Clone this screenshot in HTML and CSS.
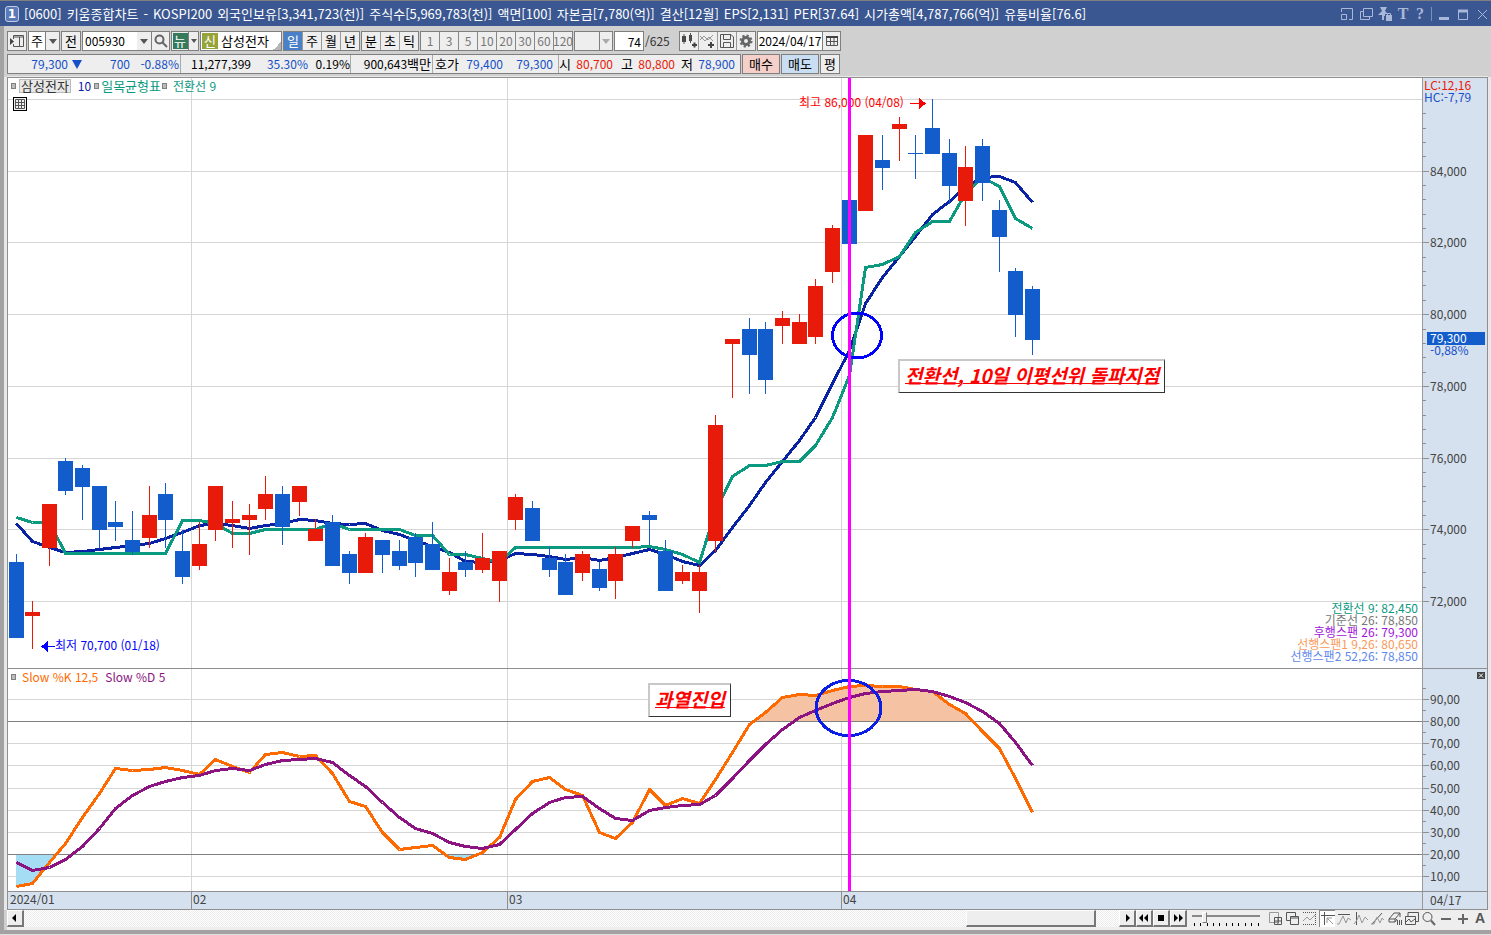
FILE: index.html
```html
<!DOCTYPE html>
<html lang="ko">
<head>
  <meta charset="UTF-8">
  <meta name="viewport" content="width=device-width, initial-scale=1.0">
  <title>[0600] 키움종합차트</title>
  <link rel="stylesheet" href="styles.css">
</head>
<body>
  <div class="window">
    <header class="titlebar">
      <span class="badge">1</span>
      <h1 class="title">
        <span>[0600]</span><span>키움종합차트</span><span>-</span><span>KOSPI200</span><span>외국인보유[3,341,723(천)]</span><span>주식수[5,969,783(천)]</span><span>액면[100]</span><span>자본금[7,780(억)]</span><span>결산[12월]</span><span>EPS[2,131]</span><span>PER[37.64]</span><span>시가총액[4,787,766(억)]</span><span>유통비율[76.6]</span>
      </h1>
      <div class="win-buttons">
        <button aria-label="축소"><svg width="14" height="14"><path d="M1.500 5V1.500H12.500V12.500H9M1.500 7.500H6.500V12.500H1.500Z"/></svg></button>
        <button aria-label="복제"><svg width="14" height="14"><path d="M4.500 1.500H13.500V9.500H4.500ZM4 4.500H1.500V12.500H10.500V10"/></svg></button>
        <button aria-label="고정"><svg width="14" height="14"><path class="solid" d="M2 0H9L7 4L10 7H7V9H6V13H4V8H0L4 4ZM8 8H14V14H8Z"/><path d="M9.500 9V6.500H12.500V9"/></svg></button>
        <button class="serif">T</button>
        <button class="serif">?</button>
        <i class="bar"></i>
        <button aria-label="최소화"><svg width="14" height="14"><path class="thick" d="M2 11.500H12"/></svg></button>
        <button aria-label="최대화"><svg width="14" height="14"><path d="M2.500 3.500H11.500V12.500H2.500Z"/><path class="thick" d="M2 4H12"/></svg></button>
        <button aria-label="닫기"><svg width="14" height="14"><path d="M3 3L12 12M12 3L3 12"/></svg></button>
      </div>
    </header>

    <div class="frame">
      <div class="toolbar">
        <button class="box sq" aria-label="패널"><svg width="16" height="16"><path class="ln" d="M4.500 6V2.500H14.500V13.500H4.500V11M5 4H14M10.500 4V13"/><path class="fl" d="M1 5L5 8.500L1 12Z"/></svg></button>
        <div class="box combo"><button class="white w17">주</button><button class="arrow" aria-label="목록"></button></div>
        <button class="box sq">전</button>
        <div class="box combo">
          <input class="code" type="text" value="005930" aria-label="종목코드"><button class="arrow noline" aria-label="종목 목록"></button>
          <button class="sq18" aria-label="검색"><svg width="16" height="16"><circle class="ln2" cx="6.500" cy="6.500" r="4"/><path class="ln2" d="M9.500 9.500L14 14"/></svg></button>
        </div>
        <div class="box combo"><button class="w17"><b class="news">뉴</b></button><button class="arrow small" aria-label="뉴스 목록"></button></div>
        <div class="box name"><b class="sin">신</b><span>삼성전자</span></div>
        <div class="box seg period"><button class="on">일</button><button>주</button><button>월</button><button>년</button></div>
        <div class="box seg intraday"><button>분</button><button>초</button><button>틱</button></div>
        <div class="box seg off"><button>1</button><button>3</button><button>5</button><button>10</button><button>20</button><button>30</button><button>60</button><button>120</button></div>
        <div class="box combo blank"><span class="w24"></span><button class="arrow dim" aria-label="단위"></button></div>
        <input class="box count" type="text" value="74" aria-label="봉 개수">
        <span class="total">/625</span>
        <div class="box seg period">
          <button aria-label="차트형태"><svg width="18" height="18"><path class="fl" d="M2 4H6V10H2ZM9 3H12V9H9ZM12 12H17V14H12ZM13.500 10.500H15.500V15.500H13.500Z"/><path class="ln" d="M4 2V12M10.500 1V11"/></svg></button>
          <button aria-label="지표추가"><svg width="18" height="18"><path class="lg" d="M1 8L5 4L9 8L14 3M1 4L6 9L10 5L14 9"/><path class="fl" d="M9 12H15V14H9ZM11 10H13V16H11Z"/></svg></button>
          <button aria-label="저장"><svg width="18" height="18"><path class="ln" d="M2.500 2.500H13L15.500 5V15.500H2.500ZM5.500 3V7.500H12.500V3M5.500 15V10.500H12.500V15"/></svg></button>
          <button aria-label="설정"><svg width="18" height="18"><circle cx="9" cy="9" r="3.500" fill="none" stroke="#666" stroke-width="3"/><circle cx="9" cy="9" r="5.500" fill="none" stroke="#666" stroke-width="2" stroke-dasharray="2.200 2.100"/></svg></button>
        </div>
        <div class="box combo">
          <input class="date" type="text" value="2024/04/17" aria-label="날짜">
          <button class="sq18" aria-label="달력"><svg width="14" height="14"><path class="ln" d="M1.500 2.500H12.500V11.500H1.500ZM5.500 4V11M9 4V11M2 7.500H12"/><path class="fl" d="M1 2H13V4H1Z"/></svg></button>
        </div>
      </div>

      <div class="quotes">
        <div class="box cells">
          <span class="down c60">79,300</span><span class="down tri"></span><span class="down c46">700</span><span class="down c48">-0.88%</span>
          <i></i><span class="c70">11,277,399</span><span class="down c58">35.30%</span><span class="c42">0.19%</span>
          <i></i><span class="c80">900,643<em>백만</em></span>
          <i></i><em class="c26">호가</em><span class="down c44">79,400</span><span class="down c50">79,300</span><b></b>
          <i></i><em class="c12">시</em><span class="up c42">80,700</span><em class="c20">고</em><span class="up c42">80,800</span><em class="c18">저</em><span class="down c42">78,900</span>
        </div>
        <button class="box buy">매수</button>
        <button class="box sell">매도</button>
        <button class="box sq">평</button>
      </div>

      <main class="chart">
        <div class="row">
          <div class="plot">
            <svg id="plot" width="100%" height="813"></svg>
            <div class="legend top">
              <i class="dot"></i><button class="stock">삼성전자</button><span class="ma">10</span><i class="dot"></i><span class="conv">일목균형표</span><i class="dot"></i><span class="conv last">전환선 9</span>
            </div>
            <button class="grid-btn" aria-label="표"><svg width="12" height="12"><path class="ln" d="M1.500 1.500H10.500V10.500H1.500ZM1 4.500H11M1 7.500H11M4.500 2V10M7.500 2V10"/></svg></button>
            <div class="legend mid"><i class="dot"></i><span class="k">Slow %K 12,5</span><span class="d">Slow %D 5</span></div>
            <ul class="spans">
              <li class="s1">전환선 9: 82,450</li>
              <li class="s2">기준선 26: 78,850</li>
              <li class="s3">후행스팬 26: 79,300</li>
              <li class="s4">선행스팬1 9,26: 80,650</li>
              <li class="s5">선행스팬2 52,26: 78,850</li>
            </ul>
            <div class="note cross">전환선, 10일 이평선위 돌파지점</div>
            <div class="note heat">과열진입</div>
          </div>
          <svg id="axis" width="65" height="813"></svg>
        </div>
        <div class="row dates">
          <svg id="months" width="100%" height="17"></svg>
          <span class="today">04/17</span>
        </div>
      </main>

      <footer class="bottom">
        <button class="step" aria-label="왼쪽"><svg width="14" height="14"><path d="M8 3V11L4 7Z"/></svg></button>
        <div class="track"><div class="thumb"></div></div>
        <button class="step" aria-label="재생"><svg width="14" height="14"><path d="M6 3V11L10 7Z"/></svg></button>
        <button class="step" aria-label="뒤로"><svg width="14" height="14"><path d="M6 3V11L2 7ZM11 3V11L7 7Z"/></svg></button>
        <button class="step" aria-label="정지"><svg width="14" height="14"><path d="M4 4H10V10H4Z"/></svg></button>
        <button class="step" aria-label="앞으로"><svg width="14" height="14"><path d="M3 3V11L7 7ZM8 3V11L12 7Z"/></svg></button>
        <div class="speed">
          <input type="range" min="0" max="10" value="1" aria-label="속도">
          <svg width="68" height="3"><path d="M2.500 0V3M8.500 0V3M15.500 0V3M21.500 0V3M27.500 0V3M34.500 0V3M40.500 0V3M46.500 0V3M53.500 0V3M59.500 0V3M66.500 0V3" stroke="#000"/></svg>
        </div>
        <div class="tools">
          <button aria-label="추가"><svg width="16" height="16"><path class="lg" d="M1.500 1.500H10.500V11.500H1.500Z"/><path class="ln" d="M6.500 6.500H13.500V13.500H6.500ZM10 7V13M7 10H13"/></svg></button>
          <button aria-label="겹치기"><svg width="16" height="16"><path class="ln" d="M5 9.500H1.500V1.500H10.500V5M5.500 5.500H13.500V13.500H5.500ZM6 7H13"/></svg></button>
          <button aria-label="영역"><svg width="16" height="16"><path class="lg" d="M1 10L5 6L8 9L13 4"/><path class="ln" stroke-dasharray="1 1" d="M1 1.500H14M1 13.500H14M13.500 3V12"/></svg></button>
          <button class="on" aria-label="십자선"><svg width="16" height="16"><path class="ln" d="M1 4.500H15M4.500 1V14"/><path class="lg" d="M7 7L13 13M7 12V7H12"/></svg></button>
          <button aria-label="수평선"><svg width="16" height="16"><path class="ln" d="M2 3.500H14"/><path class="lg" d="M1 13H3L7 5L10 12L12 7L15 9"/></svg></button>
          <button aria-label="수직선"><svg width="16" height="16"><path class="ln" d="M3.500 1V14"/><path class="lg" d="M1 13L4 9L6 4L9 12L12 6L15 9"/></svg></button>
          <button aria-label="추세선"><svg width="16" height="16"><path class="ln" d="M2 13L12 2"/><path class="lg" d="M1 13H4L7 6L10 12L12 7L14 9"/></svg></button>
          <button aria-label="모두 지우기"><svg width="16" height="16"><path class="ln" d="M2 8L7 2H13L8 8ZM2 8V11H8V8M8 11L10 8M13 2V6M10.500 9V14M12.500 9V14M14.500 9V14"/></svg></button>
          <button aria-label="차트 저장"><svg width="16" height="16"><path class="ln" d="M4 5.500V1.500H14.500V10.500H12M1.500 5.500H11.500V13.500H1.500ZM2 11L5 8L7 11L11 8"/></svg></button>
          <button aria-label="확대경"><svg width="16" height="16"><circle class="ln" cx="6.500" cy="6" r="4.500"/><path class="ln2" d="M10 9.500L14 14"/></svg></button>
          <button aria-label="축소"><svg width="16" height="16"><path class="ln2" d="M3 8H13"/></svg></button>
          <button aria-label="확대"><svg width="16" height="16"><path class="ln2" d="M3 8H13M8 3V13"/></svg></button>
          <button class="auto">A</button>
        </div>
      </footer>
    </div>
  </div>
  <script src="chart.js"></script>
</body>
</html>
```
FILE: styles.css
```css
* { box-sizing: border-box; margin: 0; padding: 0; }
body {
  background: #e0e0e0;
  font-family: "Noto Sans CJK KR", sans-serif;
  font-size: 13px;
  line-height: 18px;
  color: #000;
}
button, input {
  font: inherit;
  color: inherit;
  border: 0;
  background: none;
  display: flex;
  align-items: center;
  justify-content: center;
  flex: none;
}
svg { display: block; flex: none; }
.ln { fill: none; stroke: #555; }
.ln2 { fill: none; stroke: #666; stroke-width: 2; }
.lg { fill: none; stroke: #999; }
.fl { fill: #444; }

.window { border-top: 1px solid #7f7f7f; white-space: nowrap; overflow: hidden; }
.titlebar {
  display: flex;
  align-items: center;
  height: 25px;
  padding: 0 2px 0 5px;
  background: #3a5791;
  color: #fff;
}
.badge {
  width: 14px;
  height: 16px;
  border: 1px solid #c3cee5;
  border-radius: 3px;
  background: #5a7ab8;
  font: bold 12px/14px "DejaVu Sans", sans-serif;
  text-align: center;
}
.title {
  display: flex;
  gap: 5px;
  flex: 1;
  padding-left: 5px;
  font-size: 13px;
  font-weight: normal;
}
.win-buttons { display: flex; align-items: center; gap: 5px; color: #a9b8d8; }
.win-buttons path { fill: none; stroke: #a9b8d8; }
.win-buttons .solid { fill: #a9b8d8; stroke: none; }
.win-buttons .thick { stroke-width: 3; }
.win-buttons .serif { width: 12px; font: bold 16px/18px "Liberation Serif", serif; }
.win-buttons .bar { width: 1px; height: 14px; background: #7d90b8; }

.frame {
  background: #d0d0d0;
  border-left: 4px solid #a3a1a1;
  border-bottom: 4px solid #a3a1a1;
  padding-top: 5px;
}
.box { border: 1px solid #7f7f7f; background: #eee; height: 20px; flex: none; }
.toolbar, .quotes { display: flex; gap: 1px; padding-left: 3px; }
.quotes { margin-top: 3px; padding-bottom: 3px; }
.sq { width: 20px; }
.combo { display: flex; }
.combo > * + * { border-left: 1px solid #7f7f7f; }
.combo .noline { border-left: 0; }
.white { background: #fff; }
.w17 { width: 16px; }
.w24 { width: 24px; }
.sq18 { width: 18px; }
.arrow { width: 14px; }
.arrow::before { content: ""; border: 4px solid transparent; border-top: 5px solid #555; border-bottom: 0; }
.arrow.small { width: 10px; }
.arrow.small::before { border-width: 3px; border-top-width: 4px; border-bottom: 0; }
.arrow.dim::before { border-top-color: #aaa; }
.blank { width: 39px; }
.blank .arrow { width: 13px; }
.code { width: 54px; padding-left: 2px; background: #fff; font-size: 12px; }
.date { width: 64px; background: #fff; text-align: center; font-size: 12px; }
.news, .sin { display: block; width: 16px; height: 16px; line-height: 15px; font-weight: normal; color: #fff; text-align: center; }
.news { width: 15px; background: #357a5c; }
.sin { background: #98a43a; }
.name {
  display: flex;
  align-items: center;
  gap: 3px;
  width: 82px;
  padding-left: 1px;
  background: linear-gradient(135deg, transparent 50%, #b5b5b5 50%) right bottom / 8px 8px no-repeat #fff;
}
.seg { display: flex; }
.seg button { flex: 1 1 0; min-width: 0; }
.seg button + button { border-left: 1px solid #999; }
.seg .on { background: #4a80c8; color: #fff; }
.period { width: 77px; }
.intraday { width: 58px; }
.off { width: 153px; color: #777; font-size: 12px; }
.off button + button { border-color: #888; }
.count { width: 30px; padding-right: 2px; background: #fff; text-align: right; font-size: 12px; }
.total { width: 33px; color: #333; font-size: 12px; line-height: 20px; }

.cells { display: flex; width: 734px; font-size: 12px; }
.cells em { font-size: 13px; font-style: normal; text-align: right; flex: none; }
.cells span { text-align: right; flex: none; }
.cells i { width: 1px; background: #aaa; }
.cells b { width: 5px; }
.down { color: #1650c8; }
.up { color: #e81a0a; }
.tri { width: 16px; padding: 5px 0 0 4px; }
.tri::before { content: ""; display: block; width: 0; border: 5px solid transparent; border-top: 9px solid #1650c8; border-bottom: 0; }
.c12 { width: 12px; }
.c18 { width: 18px; }
.c20 { width: 20px; }
.c26 { width: 26px; }
.c42 { width: 42px; }
.c44 { width: 44px; }
.c46 { width: 46px; }
.c48 { width: 49px; margin-right: 1px; }
.c50 { width: 50px; }
.c58 { width: 57px; }
.c60 { width: 60px; }
.c70 { width: 70px; }
.c80 { width: 80px; margin-right: 1px; }
.buy { width: 38px; background: #f5d0cb; }
.sell { width: 38px; background: #c9def3; }

.chart {
  margin-right: 3px;
  margin-left: 3px;
  border: 1px solid #8f8f8f;
  background: #d6e1ef;
  box-shadow: -3px 0 #e8e8e8, 3px 0 #e8e8e8, 0 -1px #e8e8e8;
}
.row { display: flex; }
.plot { position: relative; flex: 1; min-width: 0; background: #fff; }
#plot { shape-rendering: crispEdges; }
#plot text, #axis text, #months text { font-size: 12px; }
#axis { border-left: 1px solid #999; }
#axis text, #months text { fill: #444; }
#axis .lc { fill: #e81a0a; }
#axis .hc { fill: #1650c8; }
#axis .now { fill: #fff; }
.legend { position: absolute; left: 3px; display: flex; align-items: center; height: 14px; line-height: 14px; }
.top { top: 1px; }
.mid { top: 592px; font-size: 12px; }
.dot { width: 5px; height: 6px; border: 1px solid #808080; background: #bbb; }
.stock { height: 14px; margin: 0 7px 0 3px; padding: 0 1px; border: 1px solid #bbb; background: #e8e8e8; color: #333; }
.ma { margin-right: 3px; font-size: 12px; color: #0a23a5; }
.conv { margin: 0 1px 0 2px; color: #0b9a80; }
.last { margin-left: 6px; font-size: 12px; }
.k { margin: 0 7px 0 6px; color: #ff6a00; }
.d { color: #8c1482; }
.grid-btn { position: absolute; left: 5px; top: 19px; width: 14px; height: 14px; border: 1px solid #000; background: #eee; }
.spans { position: absolute; right: 4px; top: 524px; list-style: none; text-align: right; font-size: 12px; line-height: 12px; }
.s1 { color: #0b9a80; }
.s2 { color: #777; }
.s3 { color: #a014dc; }
.s4 { color: #f79a5c; }
.s5 { color: #5f87eb; }
.note {
  position: absolute;
  padding: 0 5px;
  height: 34px;
  border: 2px solid #c8c8c8;
  border-right: 1px solid #333;
  border-bottom: 1px solid #333;
  background: #fff;
  color: #f00;
  font: italic bold 19px/27px "Noto Sans CJK KR", sans-serif;
  text-decoration: underline 1px;
  text-underline-offset: 0;
}
.cross { left: 890px; top: 281px; }
.heat { left: 640px; top: 605px; }

.dates { border-top: 1px solid #8f8f8f; }
#months { flex: 1; min-width: 0; }
.today { width: 65px; padding-left: 7px; border-left: 1px solid #999; font-size: 12px; line-height: 16px; color: #444; }

.bottom { display: flex; margin-left: 3px; height: 20px; padding-bottom: 3px; background: #eee; align-items: stretch; }
.step {
  width: 17px;
  border: 1px solid #fff;
  border-right: 2px solid #777;
  border-bottom: 2px solid #777;
  background: #eee;
}
.track { flex: 1; background: repeating-conic-gradient(#fff 0 25%, #ececec 0 50%) 0 0 / 2px 2px; }
.thumb {
  width: 130px;
  height: 17px;
  margin-left: auto;
  margin-right: 23px;
  border: 1px solid #fff;
  border-right: 2px solid #777;
  border-bottom: 2px solid #777;
  background: #eee;
}
.speed { width: 73px; padding: 1px 0 0 5px; }
.speed input { appearance: none; width: 68px; height: 12px; background: linear-gradient(#888, #888) 0 4px / 100% 2px no-repeat; }
.speed input::-webkit-slider-thumb {
  appearance: none;
  width: 5px;
  height: 11px;
  margin-left: 4px;
  border: 1px solid #fff;
  border-right-color: #777;
  border-bottom-color: #777;
  background: #eee;
}
.tools { display: flex; gap: 1px; padding: 0 3px 0 8px; }
.tools button { width: 16px; }
.tools .on { background: #fff; border-left: 1px solid #888; border-top: 1px solid #888; }
.auto { font: bold 14px/17px "Liberation Sans", sans-serif; color: #555; }
```
FILE: chart.js
```js
// candles: [up?, high, body top, body bottom, low] in screen rows
const candles = [
  [0,554,562,638,638],[1,601,612,616,649],[1,504,504,548,566],[0,458,461,491,495],[0,465,468,487,520],
  [0,486,486,530,548],[0,501,522,527,541],[0,511,540,552,555],[1,486,515,538,548],[0,483,494,520,548],
  [0,530,551,577,584],[1,522,544,566,570],[1,486,486,530,541],[1,501,519,523,548],[1,504,515,520,555],
  [1,476,494,509,520],[0,486,494,527,545],[1,486,486,502,516],[1,519,529,541,541],[0,515,522,566,566],
  [0,551,554,573,584],[1,533,537,573,573],[0,540,540,555,573],[0,540,551,566,570],[0,533,537,563,577],
  [0,522,544,570,570],[1,558,572,591,595],[0,551,562,570,577],[1,533,558,570,573],[1,551,551,581,602],
  [1,494,497,520,530],[0,501,508,541,541],[0,547,558,570,577],[0,554,562,595,595],[1,551,554,573,581],
  [0,562,569,588,591],[1,547,554,581,599],[1,526,526,541,548],[0,511,515,520,545],[0,540,551,591,591],
  [1,565,572,581,584],[1,565,572,591,613],[1,415,425,541,552],[1,339,339,344,398],[0,318,329,355,394],
  [0,322,329,380,394],[1,311,318,326,344],[1,314,322,344,344],[1,279,286,337,344],[1,225,228,272,283],
  [0,200,200,244,244],[1,135,135,211,211],[0,135,160,168,190],[1,117,124,129,161],[0,135,153,154,179],
  [0,99,128,154,154],[0,139,153,186,204],[1,146,167,201,226],[0,139,146,183,201],[0,200,210,237,272],
  [0,268,271,315,337],[0,286,289,340,355]
];
const ma10 = [523,541,547,552,551,549,547,545,543,538,532,525,523,525,528,525,523,519,520,523,524,523,530,534,540,546,552,561,562,560,553,554,556,559,557,560,557,553,549,554,561,565,550,527,505,482,461,440,417,383,350,303,277,256,236,214,201,187,177,176,182,202];
const conv = [517,522,522,553,553,553,553,553,553,553,520,520,523,533,533,529,529,529,529,523,529,529,529,529,535,535,554,554,558,562,547,547,547,547,547,547,547,547,546,549,554,562,511,476,465,465,461,461,445,417,375,267,264,256,232,221,221,193,177,186,218,228];
const slowK = [886,883,862,843,817,793,768,770,769,767,770,774,759,766,772,754,752,756,755,773,801,806,832,849,847,845,857,859,852,837,799,781,777,789,795,832,838,822,789,805,798,803,779,752,724,712,697,694,695,690,686,685,686,686,689,691,704,713,731,748,778,812];
const slowD = [862,870,867,859,846,828,808,795,786,781,777,775,770,768,770,764,760,759,758,762,775,786,802,817,828,833,842,846,848,844,829,813,802,797,796,808,818,820,810,807,805,804,795,778,760,744,729,717,710,703,697,693,691,690,689,691,696,702,711,723,742,765];

const LEFT = 8, TOP = 78;
const H = 813;
const RED = '#e81a0a', BLUE = '#125ccc';
const cx = i => Math.floor(16 + 16.662 * i) - LEFT;
const priceY = p => Math.round(21 + (86000 - p) * 0.03586) + 0.5;
const oscY = v => Math.round(643 + (80 - v) * 2.2167) + 0.5;
const line = (x1, y1, x2, y2, color, w = 1) =>
  `<line x1="${x1}" y1="${y1}" x2="${x2}" y2="${y2}" stroke="${color}" stroke-width="${w}"/>`;
const points = arr => arr.map((y, i) => `${cx(i) + 0.5},${y - TOP + 0.5}`).join(' ');
const poly = (arr, color) => `<polyline points="${points(arr)}" fill="none" stroke="${color}" stroke-width="3" stroke-linejoin="round"/>`;
const months = [['2024/01', 0], ['02', 183], ['03', 499], ['04', 833]];

// plot
let s = '';
for (let p = 86000; p >= 72000; p -= 2000) s += line(0, priceY(p), '100%', priceY(p), '#d6d6d6');
for (let v = 90; v >= 10; v -= 10) {
  if (v !== 80 && v !== 20) s += line(0, oscY(v), '100%', oscY(v), '#d6d6d6');
}
months.slice(1).forEach(m => s += line(m[1] + 0.5, 0, m[1] + 0.5, H, '#d6d6d6'));
s += line(0, 590.5, '100%', 590.5, '#8f8f8f');

const hi = oscY(80), lo = oscY(20), end = cx(61);
s += `<clipPath id="over"><rect width="100%" height="${hi}"/></clipPath>
  <clipPath id="under"><rect y="${lo}" width="100%" height="60"/></clipPath>
  <polygon points="${cx(0)},${hi} ${points(slowK)} ${end},${hi}" fill="#f5c3a3" clip-path="url(#over)"/>
  <polygon points="${cx(0)},${lo} ${points(slowK)} ${end},${lo}" fill="#a5def4" clip-path="url(#under)"/>`;
s += line(0, hi, '100%', hi, '#808080') + line(0, lo, '100%', lo, '#808080');
s += poly(slowK, '#ff6a00') + poly(slowD, '#8c1482');

s += poly(ma10, '#0a23a5') + poly(conv, '#0b9a80');
candles.forEach(([up, h, t, b, l], i) => {
  const c = up ? RED : BLUE, x = cx(i);
  s += `<rect x="${x}" y="${h - TOP}" width="1" height="${l - h}" fill="${c}"/>`;
  s += `<rect x="${x - 7}" y="${t - TOP}" width="15" height="${b - t}" fill="${c}"/>`;
});

s += `<text x="791" y="29" fill="#f00">최고 86,000 (04/08)</text>
  <path d="M902 25.500H912" stroke="#f00"/><path d="M911 20V31L918 25.500Z" fill="#f00"/>
  <text x="47" y="572" fill="#00f">최저 70,700 (01/18)</text>
  <path d="M38 568.500H47" stroke="#00f"/><path d="M40 563V574L33 568.500Z" fill="#00f"/>
  <ellipse cx="849" cy="257.500" rx="24.500" ry="22.500" fill="none" stroke="#00f" stroke-width="3"/>
  <ellipse cx="840.500" cy="630" rx="32.500" ry="27.500" fill="none" stroke="#0a1ee6" stroke-width="3"/>`;
s += line(841.5, 0, 841.5, H, '#f0f', 3);
document.getElementById('plot').innerHTML = s;

// right axis
s = '';
for (let p = 85600; p >= 72000; p -= 400) s += line(0, priceY(p), 3, priceY(p), '#8f8f8f');
for (let p = 84000; p >= 72000; p -= 2000) {
  s += line(0, priceY(p), 6, priceY(p), '#8f8f8f');
  s += `<text x="7" y="${priceY(p) + 4}">${p.toLocaleString('en-US')}</text>`;
}
for (let v = 95; v >= 10; v -= 5) {
  s += line(0, oscY(v), v % 10 ? 3 : 6, oscY(v), '#8f8f8f');
  if (v % 10 === 0) s += `<text x="7" y="${oscY(v) + 4}">${v},00</text>`;
}
s += line(0, 590.5, 64, 590.5, '#8f8f8f');
s += `<text class="lc" x="1" y="12">LC:12,16</text><text class="hc" x="1" y="24">HC:-7,79</text>
  <rect x="4" y="254" width="58" height="13" fill="${BLUE}"/>
  <text class="now" x="7" y="265">79,300</text><text class="hc" x="7" y="277">-0,88%</text>
  <rect x="54" y="594" width="8" height="7" fill="#444"/><path d="M56 595.500L60 599.500M60 595.500L56 599.500" stroke="#fff"/>`;
document.getElementById('axis').innerHTML = s;

// month strip
s = '';
months.forEach(([t, x]) => {
  if (x) s += line(x + 0.5, 0, x + 0.5, 17, '#8f8f8f');
  s += `<text x="${x + 2}" y="12">${t}</text>`;
});
document.getElementById('months').innerHTML = s;
```
